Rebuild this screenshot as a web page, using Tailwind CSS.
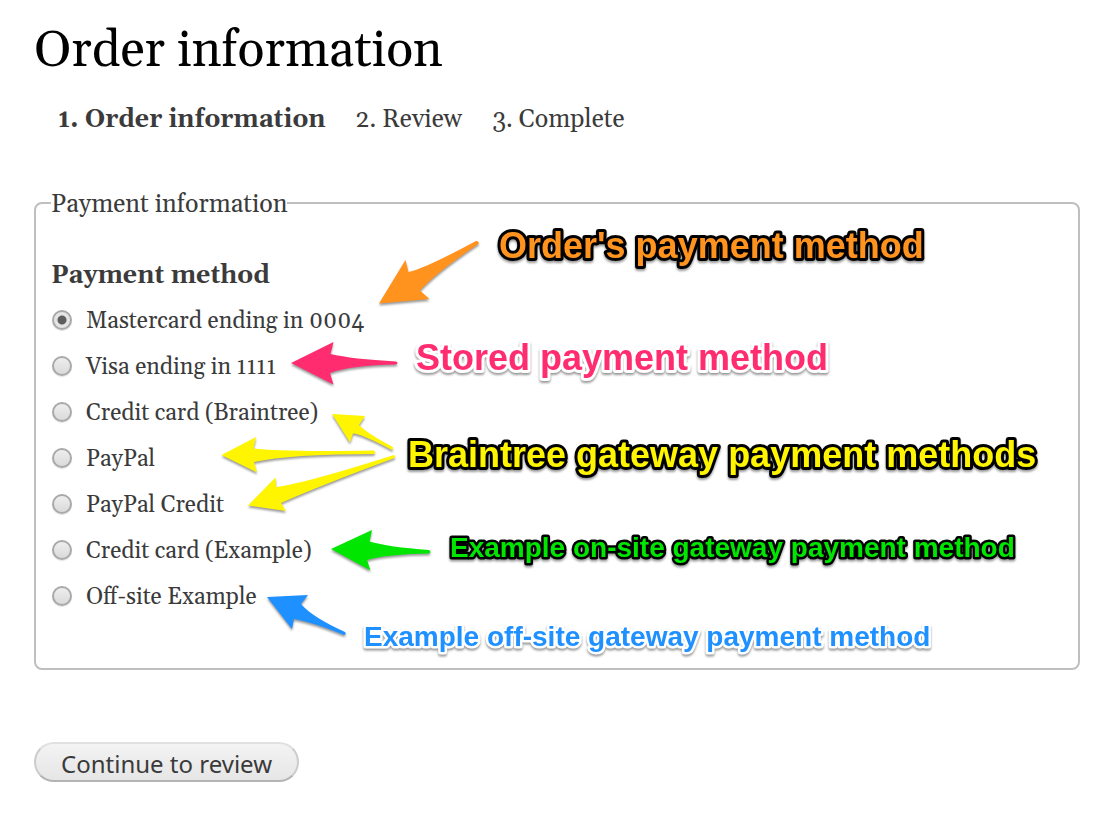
<!DOCTYPE html>
<html lang="en">
<head>
<meta charset="utf-8">
<meta name="viewport" content="width=device-width, initial-scale=1">
<title>Order information</title>
<script src="https://cdn.jsdelivr.net/npm/@tailwindcss/browser@4"></script>
</head>
<body class="bg-white font-['Gelasio','Liberation_Serif',serif] text-[25px] leading-8 text-[#3b3b3b]">
<main class="pt-5 pr-[38px] pb-8 pl-[34px]">
  <h1 class="text-[50px] leading-16 text-black">Order information</h1>

  <ol class="mt-5 flex gap-[30px] pl-6">
    <li class="font-bold" aria-current="step">1. Order information</li>
    <li>2. Review</li>
    <li>3. Complete</li>
  </ol>

  <form>
    <div class="relative mt-[49px]">
      <fieldset class="rounded-lg border-2 border-[#bfbfbf] px-[15px] pb-[49px]">
        <legend class="pt-1">Payment information</legend>
        <h2 id="method" class="mt-[39px] mb-[5px] font-bold">Payment method</h2>
        <div role="radiogroup" aria-labelledby="method" class="px-px text-[23px]">
          <label class="flex h-[46px] items-center gap-[14px]"><input type="radio" name="payment" checked class="size-5 shrink-0 appearance-none rounded-full border-2 border-[#a9a9a9] bg-linear-to-b from-[#eeeeee] to-[#dadada] shadow-[0_1px_1px_#00000022] checked:bg-[radial-gradient(circle,#5e5e5e_0_4px,#e4e4e4_5px)]"><span class="pt-1">Mastercard ending in 0004</span></label>
          <label class="flex h-[46px] items-center gap-[14px]"><input type="radio" name="payment" class="size-5 shrink-0 appearance-none rounded-full border-2 border-[#a9a9a9] bg-linear-to-b from-[#eeeeee] to-[#dadada] shadow-[0_1px_1px_#00000022] checked:bg-[radial-gradient(circle,#5e5e5e_0_4px,#e4e4e4_5px)]"><span class="pt-1">Visa ending in 1111</span></label>
          <label class="flex h-[46px] items-center gap-[14px]"><input type="radio" name="payment" class="size-5 shrink-0 appearance-none rounded-full border-2 border-[#a9a9a9] bg-linear-to-b from-[#eeeeee] to-[#dadada] shadow-[0_1px_1px_#00000022] checked:bg-[radial-gradient(circle,#5e5e5e_0_4px,#e4e4e4_5px)]"><span class="pt-1">Credit card (Braintree)</span></label>
          <label class="flex h-[46px] items-center gap-[14px]"><input type="radio" name="payment" class="size-5 shrink-0 appearance-none rounded-full border-2 border-[#a9a9a9] bg-linear-to-b from-[#eeeeee] to-[#dadada] shadow-[0_1px_1px_#00000022] checked:bg-[radial-gradient(circle,#5e5e5e_0_4px,#e4e4e4_5px)]"><span class="pt-1">PayPal</span></label>
          <label class="flex h-[46px] items-center gap-[14px]"><input type="radio" name="payment" class="size-5 shrink-0 appearance-none rounded-full border-2 border-[#a9a9a9] bg-linear-to-b from-[#eeeeee] to-[#dadada] shadow-[0_1px_1px_#00000022] checked:bg-[radial-gradient(circle,#5e5e5e_0_4px,#e4e4e4_5px)]"><span class="pt-1">PayPal Credit</span></label>
          <label class="flex h-[46px] items-center gap-[14px]"><input type="radio" name="payment" class="size-5 shrink-0 appearance-none rounded-full border-2 border-[#a9a9a9] bg-linear-to-b from-[#eeeeee] to-[#dadada] shadow-[0_1px_1px_#00000022] checked:bg-[radial-gradient(circle,#5e5e5e_0_4px,#e4e4e4_5px)]"><span class="pt-1">Credit card (Example)</span></label>
          <label class="flex h-[46px] items-center gap-[14px]"><input type="radio" name="payment" class="size-5 shrink-0 appearance-none rounded-full border-2 border-[#a9a9a9] bg-linear-to-b from-[#eeeeee] to-[#dadada] shadow-[0_1px_1px_#00000022] checked:bg-[radial-gradient(circle,#5e5e5e_0_4px,#e4e4e4_5px)]"><span class="pt-1">Off-site Example</span></label>
        </div>
      </fieldset>

      <!-- Callouts drawn over the form -->
      <svg class="pointer-events-none absolute top-0 left-0 overflow-visible font-['Liberation_Sans',sans-serif] font-bold drop-shadow-[0_2px_1px_#00000066]" width="1046" height="485" viewBox="34 185 1046 485">
        <path fill="#ff931e" d="M379 303.500L405.500 260L408.500 272Q424 269 476 241Q479 240.500 479 243.500Q437 272 420 290.500L429.500 299Z"/>
        <path fill="#ff2d6f" d="M291 363L333.500 342L330.500 354Q352 359 396 361.500Q399 363 396 364.500Q352 365 330 373L333.500 384.500Z"/>
        <path fill="#fff500" d="M332 414L365 416L359 425Q368 434 392 446.500Q394 448.500 392 450Q362 434 353 433.500L350 442.500Z"/>
        <path fill="#fff500" d="M221.500 455L256 437L253.500 448.500Q280 452 374 450.500Q376 452 374 454Q290 454 254 462L257 472.500Z"/>
        <path fill="#fff500" d="M248 505.500L275.500 477.500L276 487Q306 483 394 455Q396 456 394.500 458Q319 486 281 503L286 511Z"/>
        <path fill="#00e600" d="M331 549L372 530L369.500 541.500Q388 547 429 550Q432 552 429 553.500Q388 554 367 560L370.500 570.500Z"/>
        <path fill="#1e90ff" d="M267 597L308 595L301 604Q312 617 345 632Q347 634 344 635Q312 622 294 619L292 629Z"/>
        <g stroke-linejoin="round" class="[paint-order:stroke_fill]">
          <g class="text-4xl" stroke-width="6">
            <text x="499" y="258" fill="#ff931e" stroke="#000">Order's payment method</text>
            <text x="416" y="370" fill="#ff2d6f" stroke="#fff">Stored payment method</text>
            <text x="408" y="467" fill="#fff500" stroke="#000">Braintree gateway payment methods</text>
          </g>
          <g class="text-[28px]" stroke-width="5">
            <text x="450" y="557" fill="#00e600" stroke="#000">Example on-site gateway payment method</text>
            <text x="364" y="646" fill="#1e90ff" stroke="#fff">Example off-site gateway payment method</text>
          </g>
        </g>
      </svg>
    </div>

    <button type="submit" class="mt-[72px] block h-10 rounded-full border-2 border-t-[#e0e0e0] border-r-[#cccccc] border-b-[#b4b4b4] border-l-[#cccccc] bg-linear-to-b from-[#f3f3f3] to-[#e6e6e6] px-[25px] pt-0.5 font-['Noto_Sans',sans-serif] text-2xl leading-9 text-[#3a3a3a]">Continue to review</button>
  </form>
</main>
</body>
</html>
